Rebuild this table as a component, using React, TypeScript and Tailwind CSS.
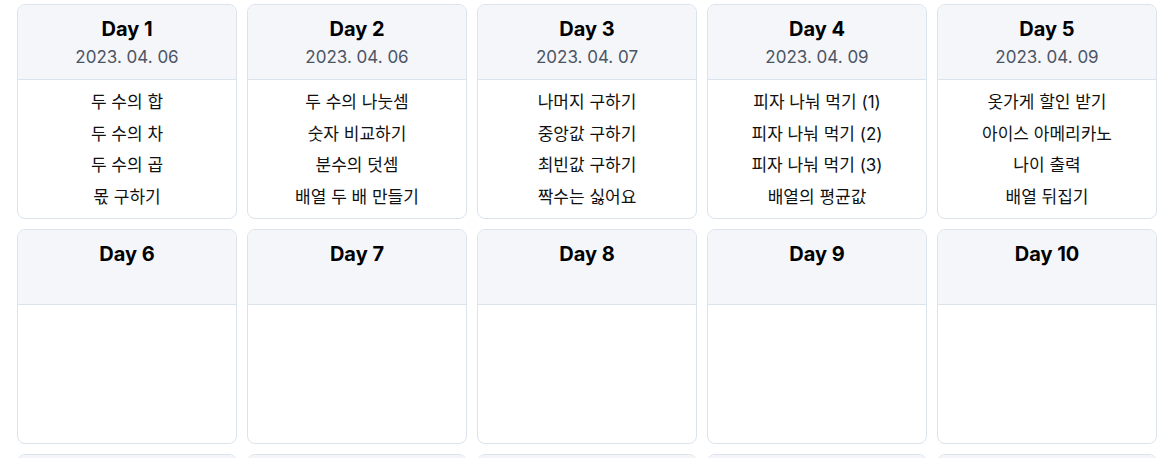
import React from "react";

type Day = { day: number; date?: string; items: string[] };

const days: Day[] = [
  { day: 1, date: "2023. 04. 06", items: ["두 수의 합", "두 수의 차", "두 수의 곱", "몫 구하기"] },
  { day: 2, date: "2023. 04. 06", items: ["두 수의 나눗셈", "숫자 비교하기", "분수의 덧셈", "배열 두 배 만들기"] },
  { day: 3, date: "2023. 04. 07", items: ["나머지 구하기", "중앙값 구하기", "최빈값 구하기", "짝수는 싫어요"] },
  { day: 4, date: "2023. 04. 09", items: ["피자 나눠 먹기 (1)", "피자 나눠 먹기 (2)", "피자 나눠 먹기 (3)", "배열의 평균값"] },
  { day: 5, date: "2023. 04. 09", items: ["옷가게 할인 받기", "아이스 아메리카노", "나이 출력", "배열 뒤집기"] },
  ...Array.from({ length: 10 }, (_, i) => ({ day: i + 6, items: [] as string[] })),
];

function DayCard({ d }: { d: Day }) {
  return (
    <div className="w-[220px] h-[215px] border border-[#dbe3ed] rounded-lg overflow-hidden bg-white flex flex-col">
      {/* 헤더 */}
      <div className="h-[75px] shrink-0 bg-[#f5f6fa] border-b border-[#dbe3ed] pt-[10px] text-center">
        <div className="text-xl leading-7 font-bold text-black">Day {d.day}</div>
        {d.date && <div className="text-[17px] leading-7 text-[#4b5563]">{d.date}</div>}
      </div>
      {/* 문제 목록 */}
      <ul className="pt-[7px] text-center text-[17px] text-[#111]">
        {d.items.map((t) => (
          <li key={t} className="h-[31.5px] leading-[31.5px]">
            {t}
          </li>
        ))}
      </ul>
    </div>
  );
}

export default function App() {
  return (
    <div
      className="bg-white min-h-screen pt-1 pl-[17px]"
      style={{ fontFamily: 'Inter, "Noto Sans CJK KR", sans-serif' }}
    >
      <div className="grid grid-cols-[repeat(5,220px)] gap-[10px]">
        {days.map((d) => (
          <DayCard key={d.day} d={d} />
        ))}
      </div>
    </div>
  );
}
